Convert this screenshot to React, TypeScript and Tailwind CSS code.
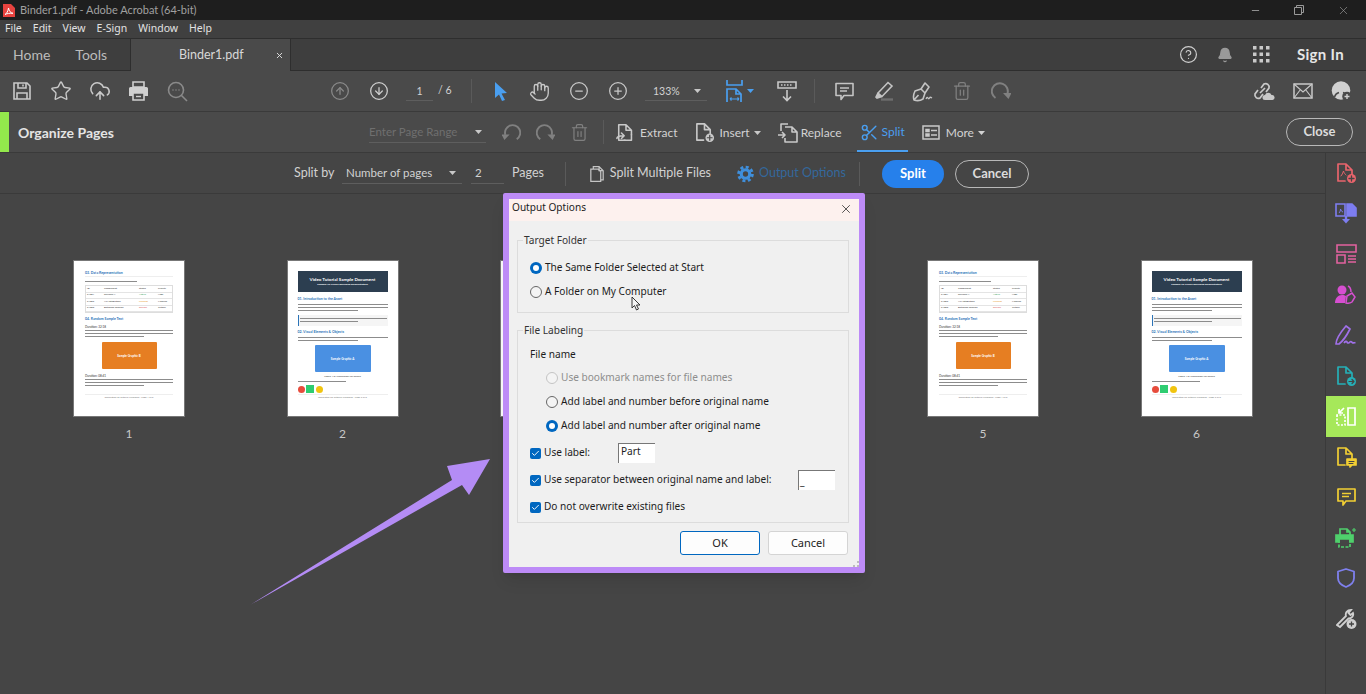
import type { ReactNode } from 'react';
import {
  Star, CloudUpload, CircleArrowUp, CircleArrowDown, Hand, CircleMinus, CirclePlus, Trash2,
  Scissors, Bell, CircleHelp, X, Minus, Check,
} from 'lucide-react';

const Caret = ({ className = 'text-[#c8c8c8]' }: { className?: string }) => (
  <svg width="7" height="4" viewBox="0 0 7 4" className={className}><path d="M0 0h7L3.5 4z" fill="currentColor" /></svg>
);

const Slot = ({ children, className = '' }: { children: ReactNode; className?: string }) => (
  <div className={`w-[39px] h-full flex items-center justify-center shrink-0 ${className}`}>{children}</div>
);

const Sep = ({ className = '' }: { className?: string }) => <div className={`w-px h-[24px] bg-[#5a5a5a] shrink-0 ${className}`} />;

// document outline with folded corner, used all over the toolbars and the rail
const DocIcon = ({ children, size = 22, color = 'currentColor' }: { children?: ReactNode; size?: number; color?: string }) => (
  <svg width={size} height={size} viewBox="0 0 22 22" fill="none" stroke={color} strokeWidth="1.7" strokeLinejoin="round" strokeLinecap="round">
    <path d="M3 2h8l6 6v5M3 2v17h7M11 2v6h6" />
    {children}
  </svg>
);

const SaveIcon = () => (
  <svg width="20" height="20" viewBox="0 0 20 20" fill="none" stroke="#c9c9c9" strokeWidth="1.6"><path d="M2 2h13l3 3v13H2z" /><path d="M6 2v5h8V2M5 18v-6h10v6" /><path d="M11 3.5v2" /></svg>
);
const PrintIcon = () => (
  <svg width="21" height="20" viewBox="0 0 21 20"><path d="M5 1h11v5H5z" fill="none" stroke="#d0d0d0" strokeWidth="1.6" /><path d="M2.5 6h16A1.5 1.5 0 0 1 20 7.5V15h-4v-3H5v3H1V7.5A1.5 1.5 0 0 1 2.5 6z" fill="#d0d0d0" /><path d="M5 12h11v7H5z" fill="none" stroke="#d0d0d0" strokeWidth="1.6" /><path d="M8 15.5h5" stroke="#d0d0d0" strokeWidth="1.4" /></svg>
);
const FindIcon = () => (
  <svg width="21" height="21" viewBox="0 0 21 21" fill="none" stroke="#8a8a8a" strokeWidth="1.6"><circle cx="9" cy="9" r="7.5" /><path d="M14.5 14.5l5.5 5.5" /><path d="M5.5 9h1M8.5 9h1M11.5 9h1" /></svg>
);
const ArrowCursor = () => (
  <svg width="16" height="21" viewBox="0 0 16 21"><path d="M2 1l12 11-5.5.6L12 19l-3 1-3-6.5L2 17z" fill="#4a9ff0" /></svg>
);
const FitIcon = () => (
  <svg width="17" height="22" viewBox="0 0 17 22" fill="none" stroke="#4a9ff0" strokeWidth="1.7"><path d="M1 0v5h15V0" /><path d="M1 22V9h9l5 5v8M10 9v5h5" /><path d="M4 19h9M4 19l1.5-1.5M4 19l1.5 1.5M13 19l-1.5-1.5M13 19l-1.5 1.5" strokeWidth="1.1" /></svg>
);
const ReadIcon = () => (
  <svg width="20" height="21" viewBox="0 0 20 21" fill="none" stroke="#c9c9c9" strokeWidth="1.6"><path d="M1 1h18v6H1z" /><path d="M4 4h12" strokeDasharray="1.5 1.5" /><path d="M10 9v10M6 15.5l4 4 4-4" /></svg>
);
const CommentIcon = () => (
  <svg width="19" height="19" viewBox="0 0 19 19" fill="none" stroke="#c4c4c4" strokeWidth="1.6" strokeLinejoin="round"><path d="M1 1.5h17v12H9l-3 4v-4H1z" /><path d="M5 6h9M5 9h7" /></svg>
);
const MarkerIcon = () => (
  <svg width="21" height="20" viewBox="0 0 21 20" fill="none" stroke="#c4c4c4" strokeWidth="1.6"><path d="M5 12L15 1.5l4 3.5L9 15.5z" /><path d="M5 12l-2 4 1 1 5-1.5" fill="#c4c4c4" /><path d="M8 18.5h12" stroke="#6e6e6e" strokeWidth="2.4" /></svg>
);
const NibIcon = () => (
  <svg width="21" height="21" viewBox="0 0 21 21" fill="none" stroke="#c4c4c4" strokeWidth="1.6" strokeLinejoin="round"><path d="M2 19c-1-3-.5-6 1-9l6-2 4 4-2 6c-3 2-6 2-9 1zM2 19l4.500-5" /><path d="M9 8l4-6 4 4-4 6" /><path d="M14 18c1-2 1.500-2 2-1s1 1 1.500 0 1-1 2.500 0" strokeWidth="1.300" /></svg>
);
const RedoIcon = ({ flip, color = '#808080', size = 19 }: { flip?: boolean; color?: string; size?: number }) => (
  <svg width={size} height={size} viewBox="0 0 20 20" className={flip ? '-scale-x-100' : ''}>
    <path d="M4.500 17A8 8 0 1 1 16.500 12.500" fill="none" stroke={color} strokeWidth="2" />
    <path d="M12 12h8.500l-3 6z" fill={color} />
  </svg>
);
const LinkCloudIcon = () => (
  <svg width="22" height="20" viewBox="0 0 22 20" fill="none" stroke="#c9c9c9" strokeWidth="1.7"><path d="M8 7l3-4a3.500 3.500 0 0 1 5 4l-3 4M10 13l-3 4a3.500 3.500 0 0 1-5-4l3-4M7 12l5-5" /><path d="M12 19a2.500 2.500 0 0 1 0-5 3.500 3.500 0 0 1 6.500 0 2.500 2.500 0 0 1 1 5z" fill="#c9c9c9" stroke="none" /></svg>
);
const EnvelopeIcon = () => (
  <svg width="20" height="16" viewBox="0 0 20 16" fill="none" stroke="#c9c9c9" strokeWidth="1.500"><path d="M1 1h18v14H1z" /><path d="M1 1l9 8 9-8M1 15l6.500-8.500M19 15l-6.500-8.500" strokeWidth="1.100" /></svg>
);
const UserPlusIcon = () => (
  <svg width="21" height="20" viewBox="0 0 21 20">
    <circle cx="10" cy="9.500" r="9.300" fill="#d0d0d0" />
    <path d="M3.500 16c.8-3 2.800-4 4.500-4.500M12 11.500c1.800.5 3.200 1.300 4 3" fill="none" stroke="#4a4a4a" strokeWidth="1.500" />
    <circle cx="16" cy="15.500" r="4.800" fill="#4a4a4a" />
    <path d="M16 13v5M13.500 15.500h5" stroke="#d0d0d0" strokeWidth="1.400" />
  </svg>
);
const GridIcon = () => (
  <svg width="17" height="17" viewBox="0 0 17 17" fill="#c9c9c9">
    {[0, 6.500, 13].flatMap((x) => [0, 6.500, 13].map((y) => <rect key={`${x}-${y}`} x={x} y={y} width="3.500" height="3.500" />))}
  </svg>
);
const GearIcon = () => (
  <svg width="18" height="18" viewBox="0 0 18 18" fill="none" stroke="#3f8fdc"><circle cx="9" cy="9" r="4.500" strokeWidth="3.400" /><circle cx="9" cy="9" r="7.300" strokeWidth="3" strokeDasharray="3.200 2.530" /></svg>
);
const PdfLogo = () => (
  <svg width="12" height="13" viewBox="0 0 12 13"><path d="M0 0h8l4 4v9H0z" fill="#e8433f" /><path d="M2 10.500c2-1 3-3.500 3.500-6.500.5 3 2 5 4.500 5.300-3-.3-6 .2-8 1.200z" fill="none" stroke="#fff" strokeWidth="1" /></svg>
);

const ActionIcon = ({ kind }: { kind: 'extract' | 'insert' | 'replace' | 'more' }) => {
  if (kind === 'extract') {
    return (
      <DocIcon size={20} color="#c9c9c9"><path d="M17 13v6h-8M1 17c0-2 2-3 7-3M6 11l3 3-3 3" /></DocIcon>
    );
  }
  if (kind === 'insert') {
    return (
      <DocIcon size={21} color="#c9c9c9"><circle cx="16.500" cy="16.500" r="4.500" fill="#c9c9c9" stroke="none" /><path d="M16.500 14v5M14 16.500h5" stroke="#4a4a4a" strokeWidth="1.300" /></DocIcon>
    );
  }
  if (kind === 'replace') {
    return (
      <svg width="21" height="20" viewBox="0 0 21 20" fill="none" stroke="#c9c9c9" strokeWidth="1.600" strokeLinejoin="round"><path d="M4 8V1h7M8 4h7l5 5v10H8v-4M15 4v5h5" stroke="#c9c9c9" /><path d="M1 12h7M5 9l3 3-3 3" /></svg>
    );
  }
  return (
    <svg width="18" height="15" viewBox="0 0 18 15" fill="none" stroke="#c9c9c9" strokeWidth="1.500"><rect x="1" y="1" width="16" height="13" /><path d="M4 4.500h3v2H4zM4 9h3v2H4z" fill="#c9c9c9" /><path d="M9 5.500h6M9 10h6" /></svg>
  );
};

const railIcons: ReactNode[] = [
  <DocIcon key="a" size={22} color="#e8646c"><circle cx="16.500" cy="16.500" r="4.500" fill="#e8646c" stroke="none" /><path d="M16.500 14v5M14 16.500h5" stroke="#444" strokeWidth="1.300" /><path d="M6 14c1-1 2-3 2.500-5 .5 2 1.500 3 2.500 4" strokeWidth="1" /></DocIcon>,
  <svg key="b" width="22" height="21" viewBox="0 0 22 21" fill="none" stroke="#7d7df0" strokeWidth="1.600"><path d="M1 1h9v12H1z" /><path d="M4 10c1-1 1.500-2.500 1.500-4 .5 1.500 1 2.500 2.500 3" strokeWidth="1" /><path d="M12 1h5l4 4v8H12z" fill="#7d7df0" /><path d="M11 13v4" strokeWidth="2.400" /><path d="M7 16h8l-4 4.500z" fill="#7d7df0" stroke="none" /></svg>,
  <svg key="c" width="21" height="20" viewBox="0 0 21 20" fill="none" stroke="#e2629f" strokeWidth="1.600"><path d="M1 1h19v7H1zM1 11h8v8H1zM12 12h8M12 15h8M12 18h8" /></svg>,
  <svg key="d" width="22" height="21" viewBox="0 0 22 21"><circle cx="7" cy="6" r="4.500" fill="#d64fd0" /><path d="M0 19c0-5 3-8 7-8 2 0 3 .5 4 1l-1 7z" fill="#d64fd0" /><path d="M11 19l1-7 5-3 3 4-3 5c-2 1.500-4 1.500-6 1z M13 2c2 1 3 3 3 6" fill="none" stroke="#d64fd0" strokeWidth="1.500" /></svg>,
  <svg key="e" width="22" height="21" viewBox="0 0 22 21" fill="none" stroke="#a070e8" strokeWidth="1.700" strokeLinejoin="round"><path d="M1 19c0-4 4-11 10-18l4 3C12 10 8 16 4 19z" /><path d="M9 18c1.500-2 2.500-2 3-1s1 1.500 2.500.3 1.500-1 2.500 0 1.500 1 3.500.2" /></svg>,
  <DocIcon key="f" size={22} color="#25b0b8"><circle cx="16.500" cy="16.500" r="4.500" fill="#25b0b8" stroke="none" /><path d="M14 16.500h5M17 14.500l2 2-2 2" stroke="#444" strokeWidth="1.200" /></DocIcon>,
  <svg key="g" width="20" height="19" viewBox="0 0 20 19" fill="none" stroke="#fff" strokeWidth="1.700"><path d="M12 1h7v17h-7z" /><path d="M1 8v10h8V8z" strokeDasharray="2 1.500" /><path d="M8 1L3 6M3 2v4h4" /></svg>,
  <DocIcon key="h" size={22} color="#f2cf33"><path d="M12 13h9v6h-4l-2 2v-2h-3z" fill="#f2cf33" /><path d="M14 15.500h5M14 17.500h4" stroke="#444" strokeWidth="1" /></DocIcon>,
  <svg key="i" width="19" height="19" viewBox="0 0 19 19" fill="none" stroke="#f2cf33" strokeWidth="1.700" strokeLinejoin="round"><path d="M1 1h17v12H9l-3 4v-4H1z" /><path d="M5 5.500h9M5 8.500h7" /></svg>,
  <svg key="j" width="22" height="21" viewBox="0 0 22 21" fill="none" stroke="#4fd06c" strokeWidth="1.700"><path d="M5 8V2h7l3 3v3M12 2v3h3" /><path d="M1 8h17v7h-3v-3H4v3H1z" fill="#4fd06c" /><path d="M4 13v7h11v-7" strokeDasharray="3 1.500" /><path d="M19 1v4M17 3h4" strokeWidth="1.100" /></svg>,
  <svg key="k" width="18" height="20" viewBox="0 0 18 20" fill="none" stroke="#7f80ee" strokeWidth="1.800" strokeLinejoin="round"><path d="M9 1l8 2.500V10c0 5-4 7.500-8 9-4-1.500-8-4-8-9V3.500z" /></svg>,
  <svg key="l" width="21" height="20" viewBox="0 0 21 20"><path d="M1 16L10 7c-1-3 1-6 5-6l-2.500 3 2 2L17 4c1 3-1.500 5.500-4.500 5.500L4 18z" fill="none" stroke="#cfcfcf" strokeWidth="1.800" /><circle cx="15.500" cy="15" r="5" fill="#cfcfcf" /><path d="M15.500 12.500v5M13 15h5" stroke="#444" strokeWidth="1.300" /></svg>,
];

const Lines = ({ n, className = '' }: { n: number; className?: string }) => (
  <div className={`flex flex-col gap-[2px] ${className}`}>
    {Array.from({ length: n }).map((_, i) => (
      <div key={i} className={`h-px bg-[#8c8c8c] ${i === n - 1 ? 'w-2/3' : 'w-full'}`} />
    ))}
  </div>
);

const tableRows = [
  ['#1001', 'Revision A', 'Active', 'High', 'text-[#3aa35a]'],
  ['#1002', 'API Integration', 'Pending', 'Medium', 'text-[#e8a33a]'],
  ['#1003', 'Database Schema', 'Review', 'Critical', 'text-[#d84a4a]'],
];

const PageA = () => (
  <div className="w-full h-full bg-white px-[11px] pt-[10px] flex flex-col text-[3px] leading-[4px] text-[#333]">
    <div className="text-[#2b74b8] font-bold text-[3.500px] border-b border-[#eee] pb-[1px]">03. Data Representation</div>
    <Lines n={1} className="mt-[4px] w-[78px]" />
    <div className="mt-[3px] border border-[#ddd]">
      {[['ID', 'Component', 'Status', 'Priority', 'text-[#333]'], ...tableRows].map((r) => (
        <div key={r[0]} className="grid grid-cols-[17px_35px_19px_1fr] h-[6.500px] border-b border-[#e4e4e4] items-center pl-[1px] text-[2.500px]">
          <span>{r[0]}</span><span>{r[1]}</span><span className={r[4]}>{r[2]}</span><span>{r[3]}</span>
        </div>
      ))}
    </div>
    <div className="mt-[4px] text-[#2b74b8] font-bold text-[3.500px]">04. Random Sample Text</div>
    <div className="mt-[4px]">Duration: 32:18</div>
    <Lines n={3} className="mt-[1px]" />
    <div className="mt-[5px] self-center w-[55px] h-[27px] bg-[#e67e22] rounded-[1px] flex items-center justify-center text-white font-bold">Sample Graphic B</div>
    <div className="mt-[5px]">Duration: 08:41</div>
    <Lines n={3} className="mt-[1px]" />
    <div className="mt-[8px] border-t border-[#eee] pt-[1px] text-[2.500px] text-center text-[#777]">Generated for Tutorial Purposes &middot; Page 1 of 6</div>
  </div>
);

const PageB = () => (
  <div className="w-full h-full bg-white px-[10px] pt-[10px] flex flex-col text-[3px] leading-[4px] text-[#333]">
    <div className="h-[21px] bg-[#2c3e50] text-white flex flex-col items-center justify-center shrink-0">
      <span className="font-bold text-[4.500px] leading-[6px]">Video Tutorial Sample Document</span>
      <span className="font-bold text-[2.500px]">Example for Screen Recording Demonstration</span>
    </div>
    <div className="mt-[5px] text-[#2b74b8] font-bold text-[3.500px]">01. Introduction to the Asset</div>
    <Lines n={3} className="mt-[3px]" />
    <div className="mt-[4px] h-[11px] bg-[#f5f5f5] border-l border-[#2b74b8] px-[1px] py-[3px]"><Lines n={2} /></div>
    <div className="mt-[4px] text-[#2b74b8] font-bold text-[3.500px]">02. Visual Elements &amp; Objects</div>
    <Lines n={2} className="mt-[3px]" />
    <div className="mt-[4px] self-center w-[56px] h-[27px] bg-[#4a90e2] rounded-[1px] flex items-center justify-center text-white font-bold">Sample Graphic A</div>
    <div className="mt-[3px] text-center text-[2.500px]">Figure 1.0: Placeholder for screen</div>
    <Lines n={1} className="mt-[2px] w-[72px]" />
    <div className="mt-[3px] flex items-center gap-[1.500px]">
      <div className="w-[7px] h-[7px] rounded-full bg-[#e74c3c]" />
      <div className="w-[8px] h-[8px] bg-[#2ecc71]" />
      <div className="w-[7px] h-[7px] rounded-full bg-[#f1c40f]" />
    </div>
    <div className="mt-[1px] border-t border-[#eee] pt-[1px] text-[2.500px] text-center text-[#777]">Generated for Tutorial Purposes &middot; Page 2 of 6</div>
  </div>
);

// pages 3 and 4 sit behind the dialog, so they stay empty
const pages = [
  { n: 1, Page: PageA },
  { n: 2, Page: PageB },
  { n: 3, Page: null },
  { n: 4, Page: null },
  { n: 5, Page: PageA },
  { n: 6, Page: PageB },
];

const Radio = ({ on, disabled }: { on?: boolean; disabled?: boolean }) => (
  on ? (
    <span className="w-[12px] h-[12px] rounded-full bg-[#0067c0] flex items-center justify-center shrink-0"><span className="w-[6px] h-[6px] rounded-full bg-white" /></span>
  ) : (
    <span className={`w-[12px] h-[12px] rounded-full border shrink-0 bg-[#f4f4f4] ${disabled ? 'border-[#c4c4c4]' : 'border-[#666]'}`} />
  )
);

const Tick = () => (
  <span className="w-[11px] h-[11px] rounded-[2px] bg-[#0067c0] flex items-center justify-center shrink-0"><Check size={9} color="#fff" strokeWidth={2.500} /></span>
);

const OutputDialog = () => (
  <div className="absolute left-[503px] top-[193px] w-[362px] h-[380px] border-[6px] border-[#bd8bf7] rounded-[2px] bg-[#f0f0f0] text-[#1c1c1c] text-[10.100px] shadow-lg flex flex-col font-['Noto_Sans',sans-serif]">
    <div className="h-[22px] bg-[#fdf1ee] flex items-center justify-between pl-[3px] pr-[6px] pb-[4px] shrink-0">
      <span>Output Options</span>
      <X size={14} color="#222" strokeWidth={1.300} className="mt-[2px]" />
    </div>
    <div className="px-[8px] flex flex-col">
      <fieldset className="mt-[11px] mr-[2px] border border-[#dcdcdc] h-[81px] pl-[12px]">
        <legend className="ml-[-7px] px-[1px] leading-[16px] text-[#333]">Target Folder</legend>
        <div className="flex items-center gap-[3px] mt-[13px] h-[14px]"><Radio on /><span>The Same Folder Selected at Start</span></div>
        <div className="flex items-center gap-[3px] mt-[10px] h-[14px]"><Radio /><span>A Folder on My Computer</span></div>
      </fieldset>
      <fieldset className="mt-[9px] mr-[2px] border border-[#dcdcdc] h-[201px] pl-[12px]">
        <legend className="ml-[-7px] px-[1px] leading-[16px] text-[#333]">File Labeling</legend>
        <div className="mt-[9px] h-[14px] leading-[14px]">File name</div>
        <div className="ml-[16px] flex items-center gap-[3px] mt-[10px] h-[14px] text-[#8d8d8d]"><Radio disabled /><span>Use bookmark names for file names</span></div>
        <div className="ml-[16px] flex items-center gap-[3px] mt-[10px] h-[14px]"><Radio /><span>Add label and number before original name</span></div>
        <div className="ml-[16px] flex items-center gap-[3px] mt-[10px] h-[14px]"><Radio on /><span>Add label and number after original name</span></div>
        <div className="flex items-center gap-[3px] mt-[10px] h-[20px]">
          <Tick /><span className="w-[71px]">Use label:</span>
          <div className="w-[37px] h-[20px] bg-white border-l border-t border-[#777] pl-[2px] leading-[15px]">Part</div>
        </div>
        <div className="flex items-center gap-[3px] mt-[7px] h-[20px]">
          <Tick /><span className="w-[251px]">Use separator between original name and label:</span>
          <div className="w-[37px] h-[20px] bg-white border-l border-t border-[#777] pl-[1px] leading-[20px]">_</div>
        </div>
        <div className="flex items-center gap-[3px] mt-[10px] h-[14px]"><Tick /><span>Do not overwrite existing files</span></div>
      </fieldset>
      <div className="flex justify-end gap-[8px] mt-[8px] mr-[3px]">
        <button className="w-[80px] h-[24px] rounded-[3px] bg-[#fdfdfd] border border-[#0067c0] text-[11px]">OK</button>
        <button className="w-[80px] h-[24px] rounded-[3px] bg-[#fdfdfd] border border-[#d4d4d4] text-[11px]">Cancel</button>
      </div>
    </div>
    {/* pointer left over the dialog in the recording */}
    <svg width="10" height="15" viewBox="0 0 10 15" className="absolute left-[122px] top-[97px]"><path d="M1 1v11l2.500-2.500L5.500 14l2-1-2-4H9z" fill="#f4f4f4" stroke="#222" strokeWidth="0.900" /></svg>
    <svg width="6" height="6" viewBox="0 0 6 6" className="absolute right-0 bottom-0" fill="#bdbdbd"><rect x="4" y="0" width="2" height="2" /><rect x="0" y="4" width="2" height="2" /><rect x="4" y="4" width="2" height="2" /></svg>
  </div>
);

export default function App() {
  return (
    <div className="relative w-[1366px] h-[694px] overflow-hidden flex flex-col bg-[#454545] text-[#d2d2d2] font-['Lato',sans-serif]">
      {/* title bar */}
      <div className="h-[20px] bg-[#1e1e1e] flex items-center shrink-0 pl-[3px] text-[11px] text-[#a0a0a0]">
        <PdfLogo />
        <span className="ml-[5px]">Binder1.pdf - Adobe Acrobat (64-bit)</span>
        <div className="ml-auto flex items-center">
          <Minus size={11} color="#9a9a9a" className="mr-[33px]" />
          <svg width="10" height="10" viewBox="0 0 10 10" fill="none" stroke="#9a9a9a" className="mr-[33px]"><path d="M.5 2.500h7v7h-7zM2.500 2.500V.5h7v7h-2" /></svg>
          <X size={13} color="#9a9a9a" className="mr-[16px]" strokeWidth={1.200} />
        </div>
      </div>
      {/* menu */}
      <div className="h-[19px] bg-[#404040] border-b border-[#2e2e2e] flex items-center gap-[11px] pl-[5px] text-[10.500px] text-[#e2e2e2] shrink-0 font-['Noto_Sans',sans-serif]">
        {['File', 'Edit', 'View', 'E-Sign', 'Window', 'Help'].map((m) => <span key={m}>{m}</span>)}
      </div>
      {/* tabs */}
      <div className="h-[32px] bg-[#3e3e3e] border-b border-[#2e2e2e] flex shrink-0">
        <div className="w-[130px] flex items-center pl-[13px] gap-[25px] text-[14px] text-[#bcbcbc]">
          <span>Home</span><span>Tools</span>
        </div>
        <div className="w-[161px] -mb-px bg-[#4a4a4a] border-x border-[#2e2e2e] flex items-center">
          <span className="ml-[48px] w-[96px] text-[12.500px] text-[#d8d8d8]">Binder1.pdf</span>
          <X size={9} color="#e0e0e0" strokeWidth={2.500} />
        </div>
        <div className="ml-auto flex items-center">
          <CircleHelp size={19} color="#cfcfcf" strokeWidth={1.500} className="mr-[19px]" />
          <Bell size={16} color="#9a9a9a" fill="#9a9a9a" className="mr-[20px]" />
          <GridIcon />
          <span className="ml-[27px] w-[69px] text-[15px] font-bold tracking-[0.3px] text-[#e6e6e6]">Sign In</span>
        </div>
      </div>
      {/* tools */}
      <div className="h-[41px] bg-[#4a4a4a] border-b border-[#3a3a3a] flex items-center shrink-0 pl-[2px]">
        <Slot><SaveIcon /></Slot>
        <Slot><Star size={22} color="#c9c9c9" strokeWidth={1.500} /></Slot>
        <Slot><CloudUpload size={22} color="#c9c9c9" strokeWidth={1.700} /></Slot>
        <Slot><PrintIcon /></Slot>
        <Slot><FindIcon /></Slot>
        <Slot className="ml-[123px]"><CircleArrowUp size={20} color="#8a8a8a" strokeWidth={1.500} /></Slot>
        <Slot><CircleArrowDown size={20} color="#cfcfcf" strokeWidth={1.500} /></Slot>
        <div className="ml-[8px] w-[27px] border-b border-[#5e5e5e] text-center text-[10.500px] leading-[18px]">1</div>
        <span className="ml-[5px] text-[10.500px] w-[25px]">/ 6</span>
        <Sep className="ml-[8px]" />
        <Slot className="ml-[9px]"><ArrowCursor /></Slot>
        <Slot><Hand size={21} color="#c9c9c9" strokeWidth={1.500} /></Slot>
        <Slot><CircleMinus size={20} color="#c9c9c9" strokeWidth={1.500} /></Slot>
        <Slot><CirclePlus size={20} color="#c9c9c9" strokeWidth={1.500} /></Slot>
        <div className="ml-[8px] w-[62px] border-b border-[#5e5e5e] flex items-center justify-between pl-[8px] pr-[6px] leading-[18px] text-[10.500px]">
          <span>133%</span><Caret />
        </div>
        <div className="ml-[19px] w-[30px] flex items-center gap-[4px]"><FitIcon /><Caret className="text-[#4a9ff0]" /></div>
        <Slot className="ml-[11px]"><ReadIcon /></Slot>
        <Sep className="ml-[8px]" />
        <Slot className="ml-[10px]"><CommentIcon /></Slot>
        <Slot><MarkerIcon /></Slot>
        <Slot><NibIcon /></Slot>
        <Slot><Trash2 size={20} color="#808080" strokeWidth={1.500} /></Slot>
        <Slot><RedoIcon size={20} /></Slot>
        <Slot className="ml-auto"><LinkCloudIcon /></Slot>
        <Slot><EnvelopeIcon /></Slot>
        <Slot className="mr-[5px]"><UserPlusIcon /></Slot>
      </div>
      {/* organize pages */}
      <div className="h-[41px] bg-[#4a4a4a] border-b border-[#3a3a3a] flex items-center shrink-0 text-[12px]">
        <div className="w-[9px] h-full bg-[#93e84c]" />
        <span className="ml-[9px] w-[351px] font-bold text-[14px] text-[#e4e4e4]">Organize Pages</span>
        <div className="w-[117px] border-b border-[#5e5e5e] flex items-center justify-between pr-[4px] leading-[20px] text-[11.500px] text-[#6f6f6f]">
          <span>Enter Page Range</span><Caret />
        </div>
        <div className="ml-[8px] w-[34px] flex justify-center"><RedoIcon flip /></div>
        <div className="w-[34px] flex justify-center"><RedoIcon /></div>
        <div className="w-[34px] flex justify-center"><Trash2 size={19} color="#808080" strokeWidth={1.500} /></div>
        <Sep className="ml-[7px]" />
        <div className="ml-[12px] pt-[1px] flex items-center gap-[4px]"><ActionIcon kind="extract" /><span>Extract</span></div>
        <div className="ml-[17px] pt-[1px] flex items-center gap-[4px]"><ActionIcon kind="insert" /><span>Insert</span><Caret /></div>
        <div className="ml-[16px] pt-[1px] flex items-center gap-[3px]"><ActionIcon kind="replace" /><span>Replace</span></div>
        <div className="ml-[15px] h-full pt-[2px] flex items-center gap-[3px] px-[3px] border-b-[2px] border-[#4a9ff0] text-[#4a9ff0]">
          <Scissors size={19} color="#4a9ff0" strokeWidth={1.800} /><span>Split</span>
        </div>
        <div className="ml-[14px] pt-[1px] flex items-center gap-[6px]"><ActionIcon kind="more" /><span>More</span><Caret className="-ml-[2px]" /></div>
        <button className="ml-auto mr-[13px] w-[67px] h-[28px] rounded-full border border-[#b8b8b8] font-bold text-[13px] text-[#dcdcdc]">Close</button>
      </div>
      {/* everything under the toolbars */}
      <div className="flex-1 flex min-h-0">
        <div className="w-[1325px] flex flex-col">
          <div className="h-[41px] pt-[1px] border-b border-[#3a3a3a] flex items-center pl-[294px] text-[12.500px] whitespace-nowrap shrink-0">
            <span className="w-[48px]">Split by</span>
            <div className="w-[120px] border-b border-[#5e5e5e] flex items-center justify-between pl-[4px] pr-[6px] leading-[20px] text-[11.500px]">
              <span>Number of pages</span><Caret />
            </div>
            <div className="ml-[9px] w-[33px] border-b border-[#5e5e5e] pl-[4px] leading-[20px] text-[11.500px]">2</div>
            <span className="ml-[8px] w-[53px]">Pages</span>
            <Sep />
            <div className="ml-[24px] flex items-center gap-[5px] w-[121px] shrink-0">
              <svg width="18" height="20" viewBox="0 0 18 20" fill="none" stroke="#c4c4c4" strokeWidth="1.500"><path d="M4 4V1h7l5 5v11h-3M11 1v5h5" /><path d="M1 4h9l3 3v12H1z" /></svg>
              <span>Split Multiple Files</span>
            </div>
            <div className="ml-[26px] flex items-center gap-[5px] w-[109px] shrink-0 text-[#34689c]">
              <GearIcon />
              <span>Output Options</span>
            </div>
            <Sep className="ml-[13px]" />
            <button className="ml-[22px] w-[62px] h-[28px] rounded-full bg-[#2680eb] text-white font-bold text-[13px]">Split</button>
            <button className="ml-[11px] w-[74px] h-[28px] rounded-full border border-[#b8b8b8] font-bold text-[13px] text-[#dcdcdc]">Cancel</button>
          </div>
          <div className="flex-1 pl-[73px] pt-[66px] flex gap-[101.500px]">
            {pages.map(({ n, Page }) => (
              <div key={n} className="w-[112px] shrink-0 flex flex-col items-center">
                <div className="w-[112px] h-[157px] bg-white border border-[#777]">{Page && <Page />}</div>
                {Page && <span className="mt-[8px] text-[12px] text-[#c8c8c8]">{n}</span>}
              </div>
            ))}
          </div>
        </div>
        {/* right rail */}
        <div className="w-[41px] border-l border-[#3a3a3a] flex flex-col items-stretch shrink-0">
          {railIcons.map((icon, i) => (
            <div key={i} className={`h-[40.500px] flex items-center justify-center ${i === 6 ? 'bg-[#a6e85a]' : ''}`}>{icon}</div>
          ))}
        </div>
      </div>
      <OutputDialog />
      {/* purple annotation arrow */}
      <svg width="260" height="160" viewBox="0 0 260 160" className="absolute left-[240px] top-[452px] pointer-events-none">
        <path d="M10 153L212 28 207 14 250 7 229 43 222 33z" fill="#b48cf5" />
      </svg>
    </div>
  );
}
